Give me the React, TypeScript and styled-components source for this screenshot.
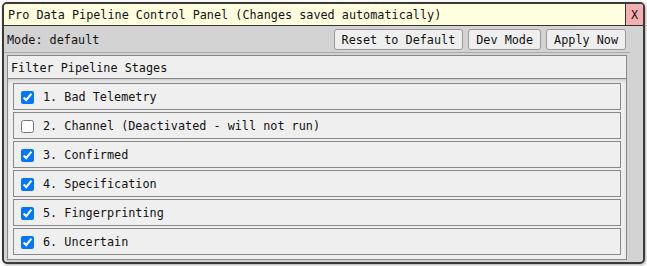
import React, { useState } from "react";
import styled, { createGlobalStyle } from "styled-components";

const Global = createGlobalStyle`
  html, body { margin: 0; padding: 0; background: #ffffff; }
  * { box-sizing: border-box; }
`;

const mono = `"DejaVu Sans Mono", "Liberation Mono", monospace`;

const Panel = styled.div`
  margin: 2px;
  width: 643px;
  height: 262px;
  border: 2px solid #3a3a3a;
  border-radius: 5px;
  background: #d3d3d3;
  overflow: hidden;
  font-family: ${mono};
  font-size: 11.8px;
  color: #111;
  display: flex;
  flex-direction: column;
  box-shadow: 1px 1px 3px rgba(0, 0, 0, 0.35);
`;

const TitleBar = styled.div`
  height: 22px;
  flex: none;
  display: flex;
  align-items: stretch;
  background: #ffffe0;
  border-bottom: 1px solid #333;
`;

const Title = styled.div`
  flex: 1;
  display: flex;
  align-items: center;
  padding: 1px 0 0 4px;
`;

const CloseButton = styled.button`
  width: 18px;
  border: none;
  border-left: 1px solid #333;
  background: #f4b0b0;
  font-family: ${mono};
  font-size: 11.8px;
  padding: 1px 0 0 0;
  color: #111;
`;

const Body = styled.div`
  flex: 1;
  display: flex;
  flex-direction: column;
  padding: 0 13px 0 0;
`;

const Controls = styled.div`
  height: 27px;
  flex: none;
  display: flex;
  align-items: center;
  padding: 1px 4px 0 3px;
  border-bottom: 1px solid #aaa;
`;

const ModeLabel = styled.span`
  flex: 1;
`;

const Actions = styled.div`
  display: flex;
  gap: 5px;
`;

const Button = styled.button`
  height: 21px;
  padding: 0 7px;
  border: 1px solid #999;
  border-radius: 3px;
  background: #efefef;
  font-family: ${mono};
  font-size: 11.8px;
  color: #111;
`;

const FilterBox = styled.div`
  margin: 2px 3px 0 3px;
  border: 1px solid #888;
  background: #efefef;
  display: flex;
  flex-direction: column;
`;

const FilterHeader = styled.div`
  height: 23px;
  display: flex;
  align-items: center;
  padding: 1px 0 0 3px;
  border-bottom: 1px solid #888;
`;

const StageList = styled.div`
  display: flex;
  flex-direction: column;
  gap: 2px;
  padding: 4px 5px 4px 5px;
  box-shadow: inset 0 3px 4px -2px rgba(0, 0, 0, 0.2);
`;

const StageRow = styled.label`
  height: 27px;
  display: flex;
  align-items: center;
  gap: 9px;
  padding: 1px 0 0 7px;
  border: 1px solid #888;
  background: #efefef;
`;

const Check = styled.input`
  width: 13px;
  height: 13px;
  margin: 0;
  accent-color: #0075ff;
`;

const initialStages = [
  { label: "1. Bad Telemetry", on: true },
  { label: "2. Channel (Deactivated - will not run)", on: false },
  { label: "3. Confirmed", on: true },
  { label: "4. Specification", on: true },
  { label: "5. Fingerprinting", on: true },
  { label: "6. Uncertain", on: true },
];

export default function App() {
  const [stages, setStages] = useState(initialStages);
  return (
    <>
      <Global />
      <Panel>
        <TitleBar>
          <Title>Pro Data Pipeline Control Panel (Changes saved automatically)</Title>
          <CloseButton>X</CloseButton>
        </TitleBar>
        <Body>
          <Controls>
            <ModeLabel>Mode: default</ModeLabel>
            <Actions>
              <Button>Reset to Default</Button>
              <Button>Dev Mode</Button>
              <Button>Apply Now</Button>
            </Actions>
          </Controls>
          <FilterBox>
            <FilterHeader>Filter Pipeline Stages</FilterHeader>
            <StageList>
              {stages.map((s, i) => (
                <StageRow key={s.label}>
                  <Check
                    type="checkbox"
                    checked={s.on}
                    onChange={() =>
                      setStages((prev) =>
                        prev.map((p, j) => (j === i ? { ...p, on: !p.on } : p))
                      )
                    }
                  />
                  <span>{s.label}</span>
                </StageRow>
              ))}
            </StageList>
          </FilterBox>
        </Body>
      </Panel>
    </>
  );
}
